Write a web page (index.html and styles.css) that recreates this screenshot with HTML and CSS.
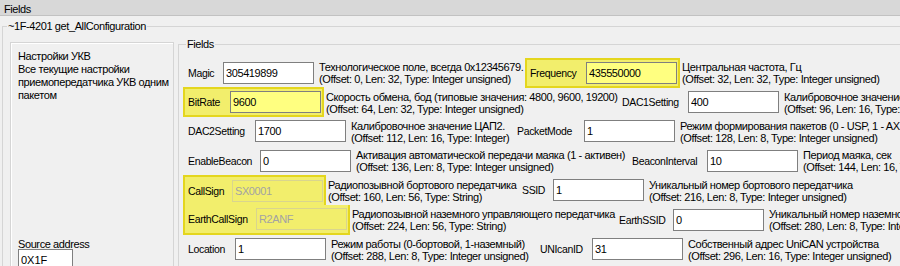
FILE: index.html
```html
<!DOCTYPE html>
<html lang="ru">
<head>
<meta charset="utf-8">
<title>Fields</title>
<link rel="stylesheet" href="styles.css">
</head>
<body>
<div class="titlebar">Fields</div>
<fieldset class="group outer">
  <legend>~1F-4201 get_AllConfiguration</legend>
  <div class="layout">
    <div class="info">
      <div class="info-text">Настройки УКВ<br>Все текущие настройки<br>приемопередатчика УКВ одним<br>пакетом</div>
      <div class="addr-label">Source address</div>
      <input class="addr-input" type="text" value="0X1F" readonly>
    </div>
    <fieldset class="group fields">
      <legend>Fields</legend>
      <div class="rows">
        <div class="row">
          <div class="field magic">
            <div class="box"><span class="lbl">Magic</span><input class="inp" type="text" value="305419899" readonly></div>
            <div class="desc">Технологическое поле, всегда 0x12345679.<br>(Offset: 0, Len: 32, Type: Integer unsigned)</div>
          </div>
          <div class="field hl frequency">
            <div class="box"><span class="lbl">Frequency</span><input class="inp" type="text" value="435550000" readonly></div>
            <div class="desc">Центральная частота, Гц<br>(Offset: 32, Len: 32, Type: Integer unsigned)</div>
          </div>
        </div>
        <div class="row">
          <div class="field hl bitrate">
            <div class="box"><span class="lbl">BitRate</span><input class="inp" type="text" value="9600" readonly></div>
            <div class="desc">Скорость обмена, бод (типовые значения: 4800, 9600, 19200)<br>(Offset: 64, Len: 32, Type: Integer unsigned)</div>
          </div>
          <div class="field dac1">
            <div class="box"><span class="lbl">DAC1Setting</span><input class="inp" type="text" value="400" readonly></div>
            <div class="desc">Калибровочное значение ЦАП1.<br>(Offset: 96, Len: 16, Type: Integer)</div>
          </div>
        </div>
        <div class="row">
          <div class="field dac2">
            <div class="box"><span class="lbl">DAC2Setting</span><input class="inp" type="text" value="1700" readonly></div>
            <div class="desc">Калибровочное значение ЦАП2.<br>(Offset: 112, Len: 16, Type: Integer)</div>
          </div>
          <div class="field packetmode">
            <div class="box"><span class="lbl">PacketMode</span><input class="inp" type="text" value="1" readonly></div>
            <div class="desc">Режим формирования пакетов (0 - USP, 1 - AX.25)<br>(Offset: 128, Len: 8, Type: Integer unsigned)</div>
          </div>
        </div>
        <div class="row">
          <div class="field enablebeacon">
            <div class="box"><span class="lbl">EnableBeacon</span><input class="inp" type="text" value="0" readonly></div>
            <div class="desc">Активация автоматической передачи маяка (1 - активен)<br>(Offset: 136, Len: 8, Type: Integer unsigned)</div>
          </div>
          <div class="field beaconinterval">
            <div class="box"><span class="lbl">BeaconInterval</span><input class="inp" type="text" value="10" readonly></div>
            <div class="desc">Период маяка, сек<br>(Offset: 144, Len: 16, Type: Integer unsigned)</div>
          </div>
        </div>
        <div class="row">
          <div class="field hl callsign">
            <div class="box"><span class="lbl">CallSign</span><input class="inp" type="text" value="SX0001" disabled></div>
            <div class="desc">Радиопозывной бортового передатчика<br>(Offset: 160, Len: 56, Type: String)</div>
          </div>
          <div class="field ssid">
            <div class="box"><span class="lbl">SSID</span><input class="inp" type="text" value="1" readonly></div>
            <div class="desc">Уникальный номер бортового передатчика<br>(Offset: 216, Len: 8, Type: Integer unsigned)</div>
          </div>
        </div>
        <div class="row">
          <div class="field hl earthcallsign">
            <div class="box"><span class="lbl">EarthCallSign</span><input class="inp" type="text" value="R2ANF" disabled></div>
            <div class="desc">Радиопозывной наземного управляющего передатчика<br>(Offset: 224, Len: 56, Type: String)</div>
          </div>
          <div class="field earthssid">
            <div class="box"><span class="lbl">EarthSSID</span><input class="inp" type="text" value="0" readonly></div>
            <div class="desc">Уникальный номер наземного передатчика<br>(Offset: 280, Len: 8, Type: Integer unsigned)</div>
          </div>
        </div>
        <div class="row">
          <div class="field location">
            <div class="box"><span class="lbl">Location</span><input class="inp" type="text" value="1" readonly></div>
            <div class="desc">Режим работы (0-бортовой, 1-наземный)<br>(Offset: 288, Len: 8, Type: Integer unsigned)</div>
          </div>
          <div class="field unicanid">
            <div class="box"><span class="lbl">UNIcanID</span><input class="inp" type="text" value="31" readonly></div>
            <div class="desc">Собственный адрес UniCAN устройства<br>(Offset: 296, Len: 16, Type: Integer unsigned)</div>
          </div>
        </div>
      </div>
    </fieldset>
  </div>
</fieldset>
</body>
</html>
```

FILE: styles.css
```css
html, body {
  margin: 0;
  padding: 0;
}
body {
  width: 900px;
  height: 266px;
  overflow: hidden;
  background: #f0f0f0;
  color: #000;
  font-family: "Liberation Sans", Arial, sans-serif;
  font-size: 11px;
  letter-spacing: -0.4px;
  line-height: 13px;
}

.titlebar {
  height: 13px;
  padding-top: 2px;
  line-height: 15px;
  padding-left: 4px;
  background: #d8d8d8;
  border-bottom: 1px solid #c2c2c2;
}

.group {
  margin: 0;
  padding: 0;
  border: 1px solid #d5d5d5;
  min-width: 0;
}
.group > legend {
  padding: 0 1px;
  line-height: 13px;
}

.outer {
  margin: 4px 0 0 2px;
  width: 960px;
  height: 400px;
}
.outer > legend {
  margin-left: 4px;
}

.layout {
  display: flex;
  align-items: flex-start;
  padding-left: 7px;
}

.info {
  flex: none;
  box-sizing: border-box;
  width: 164px;
  height: 260px;
  margin-top: 9px;
  padding: 7px 0 0 7px;
  border: 1px solid #d5d5d5;
  box-shadow: inset 1px 1px 0 #fff;
}
.info-text {
  white-space: nowrap;
}
.addr-label {
  margin-top: 136px;
  margin-bottom: -2px;
}
.addr-input {
  box-sizing: border-box;
  width: 55px;
  height: 21px;
  margin: 0;
  padding: 0 0 0 2px;
  border: 1px solid #7f7f7f;
  background: #fff;
  font: inherit;
  color: #000;
  outline: none;
}

.fields {
  flex: none;
  width: 760px;
  height: 300px;
  margin: 5px 0 0 4px;
}
.fields > legend {
  margin-left: 7px;
}

.rows {
  display: flex;
  flex-direction: column;
  padding: 7px 0 0 4px;
}
.row {
  display: flex;
  align-items: center;
  height: 29.4px;
}
.field {
  flex: none;
  display: flex;
  align-items: center;
}
.box {
  box-sizing: border-box;
  display: flex;
  align-items: center;
  height: 30px;
  padding-left: 5px;
}
.hl .box {
  background: #f2ee6c;
  border: 2px solid #e4d61e;
  padding: 0 1px 0 3px;
}
.callsign .box {
  border-bottom-width: 0;
}
.earthcallsign .box {
  border-top-width: 0;
}
.lbl {
  flex: none;
  white-space: nowrap;
  padding-top: 1px;
  font-size: 10.5px;
  letter-spacing: -0.35px;
}
.inp {
  box-sizing: border-box;
  flex: none;
  width: 91px;
  height: 22px;
  margin: 0;
  padding: 0 0 0 2px;
  border: 1px solid #7f7f7f;
  background: #fff;
  font: inherit;
  letter-spacing: inherit;
  color: #000;
  outline: none;
}
.hl .inp {
  background: #ffff80;
}
.inp:disabled {
  background: transparent;
  border-color: #d9d58e;
  color: #a3a3a3;
}
.desc {
  flex: none;
  margin-left: 5px;
  padding-top: 1px;
  line-height: 12px;
  white-space: nowrap;
}
.hl .desc {
  margin-left: 2px;
}

/* per-field label and description widths */
.magic .lbl { width: 35px; }
.magic .desc { width: 206px; }
.frequency .lbl { width: 56px; }

.bitrate .lbl { width: 42px; }
.bitrate .desc { width: 291px; }
.dac1 .lbl { width: 66px; }

.dac2 .lbl { width: 67px; }
.dac2 .desc { width: 161px; }
.packetmode .lbl { width: 67px; }

.enablebeacon .lbl { width: 72px; }
.enablebeacon .desc { width: 271px; }
.beaconinterval .lbl { width: 75px; }

.callsign .lbl { width: 44px; }
.callsign .desc { width: 189px; }
.ssid .lbl { width: 31px; }

.earthcallsign .lbl { width: 68px; }
.earthcallsign .desc { width: 262px; }
.earthssid .lbl { width: 54px; }

.location .lbl { width: 47px; }
.location .desc { width: 204px; }
.unicanid .lbl { width: 52px; }
```
